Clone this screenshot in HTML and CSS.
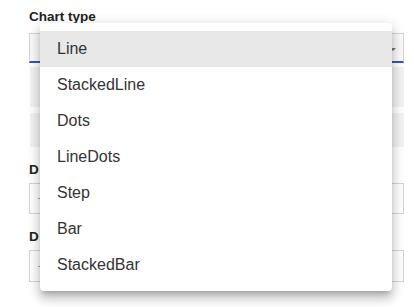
FILE: index.html
```html
<!DOCTYPE html>
<html>
<head>
<meta charset="utf-8">
<link rel="stylesheet" href="styles.css">
</head>
<body>
<div class="form">
  <div class="label first">Chart type</div>
  <div class="select"><span class="arrow"></span></div>
  <div class="band b1"></div>
  <div class="band b2"></div>
  <div class="label second">D</div>
  <div class="input"><span class="mark"></span></div>
  <div class="label third">D</div>
  <div class="input last"><span class="mark"></span></div>
</div>
<ul class="menu">
  <li class="item active">Line</li>
  <li class="item">StackedLine</li>
  <li class="item">Dots</li>
  <li class="item">LineDots</li>
  <li class="item">Step</li>
  <li class="item">Bar</li>
  <li class="item">StackedBar</li>
</ul>
</body>
</html>
```

FILE: styles.css
```css
html, body {
  margin: 0;
  padding: 0;
  background: #fff;
  font-family: "Liberation Sans", Arial, sans-serif;
}
.form {
  padding: 8px 10px 0 29px;
  display: flex;
  flex-direction: column;
}
.label {
  font-weight: bold;
  font-size: 13.5px;
  line-height: 16px;
  color: #222;
  height: 16px;
}
.label.first { margin-top: 1px; }
.select {
  margin-top: 8px;
  height: 27px;
  border: 1px solid #d4d4d4;
  border-bottom: 2px solid #3f51b5;
  position: relative;
  background: #fafafa;
}
.arrow {
  position: absolute;
  right: 7px;
  top: 14px;
  width: 0;
  height: 0;
  border-left: 3px solid transparent;
  border-right: 3px solid transparent;
  border-top: 3px solid #777;
}
.band {
  background: #f3f3f3;
  margin-left: 1px;
}
.b1 { margin-top: 4px; height: 40px; }
.b2 { margin-top: 6px; height: 34px; }
.label.second { margin-top: 15px; }
.input {
  margin-top: 5px;
  height: 29px;
  border: 1px solid #d4d4d4;
  display: flex;
  align-items: center;
  padding-left: 8px;
}
.mark {
  width: 3px;
  height: 1px;
  background: #aaa;
}
.label.third { margin-top: 15px; }
.input.last { height: 30px; }
.menu {
  position: absolute;
  left: 40px;
  top: 23px;
  width: 352px;
  margin: 0;
  padding: 8px 0;
  list-style: none;
  background: #fff;
  border-radius: 4px;
  box-shadow: 0 5px 5px -3px rgba(0,0,0,0.2), 0 8px 10px 1px rgba(0,0,0,0.14), 0 3px 14px 2px rgba(0,0,0,0.12);
}
.item {
  height: 36px;
  line-height: 36px;
  padding-left: 17px;
  font-size: 16px;
  color: #333;
}
.item.active {
  background: #e8e8e8;
}
```
